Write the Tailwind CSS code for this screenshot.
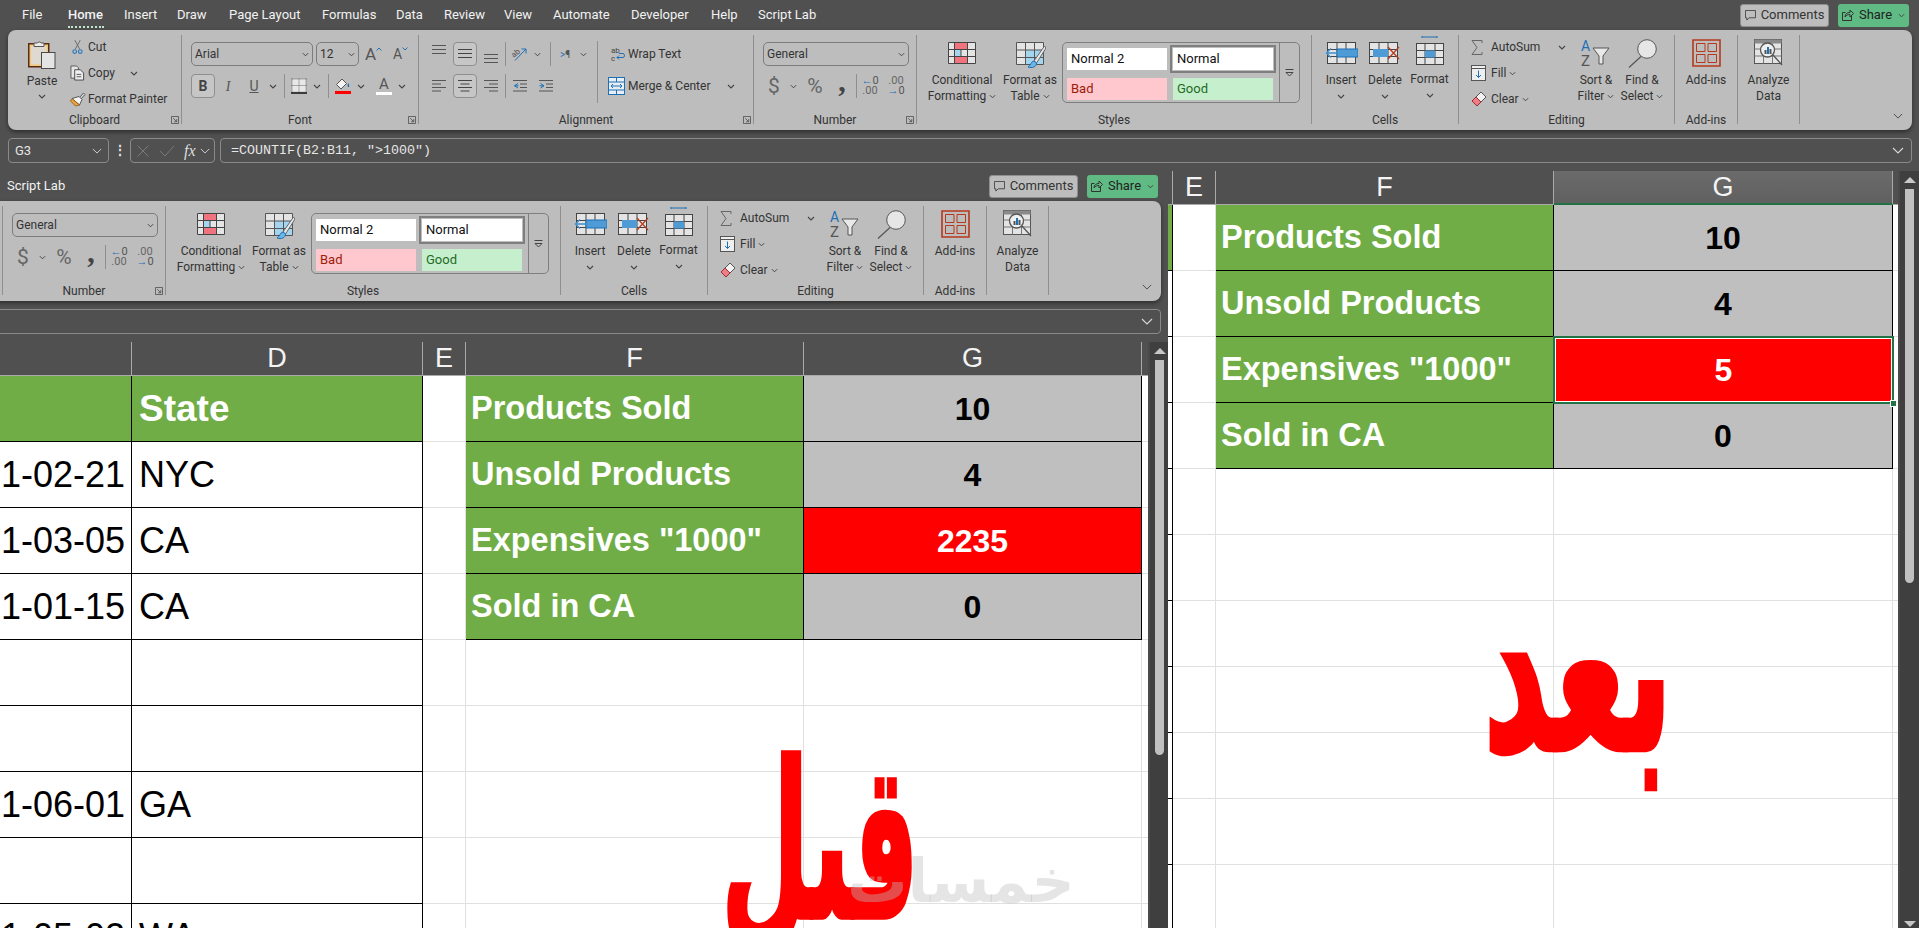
<!DOCTYPE html>
<html lang="en">
<head>
<meta charset="UTF-8">
<title>Excel COUNTIF before and after</title>
<script src="https://cdn.jsdelivr.net/npm/@tailwindcss/browser@4"></script>
</head>
<body class="bg-[#505050] overflow-hidden">

<!-- icon sheet -->
<svg class="absolute w-0 h-0">
  <symbol id="chev" viewBox="0 0 8 5"><path d="M1 1l3 3 3-3" fill="none" stroke="#444" stroke-width="1.1"/></symbol>
  <symbol id="chevl" viewBox="0 0 12 7"><path d="M1 1l5 5 5-5" fill="none" stroke="#d8d8d8" stroke-width="1.1"/></symbol>
  <symbol id="chevd" viewBox="0 0 12 7"><path d="M1 1l5 5 5-5" fill="none" stroke="#444" stroke-width="1.1"/></symbol>
  <symbol id="launch" viewBox="0 0 9 9"><path d="M.5 8.5v-8h8v8zM2.5 2.5l4 4M6.5 3.5v3h-3" fill="none" stroke="#555"/></symbol>
  <symbol id="paste" viewBox="0 0 28 30">
    <rect x=".75" y="4.75" width="20" height="23" fill="#f3c878" stroke="#5b2a12" stroke-width="1.5"/>
    <rect x="3" y="7" width="15.5" height="18.5" fill="#dedad2"/>
    <path d="M6 7.5V4h3.5a2 2 0 0 1 3.500 0H16v3.500z" fill="#ececec" stroke="#555"/>
    <rect x="13.500" y="13.500" width="13.500" height="16" fill="#e4e4e4" stroke="#4a4a4a"/>
  </symbol>
  <symbol id="cut" viewBox="0 0 12 16"><path d="M3 .5l5.500 10M9 .5L3.500 10.500" stroke="#666" fill="none"/><circle cx="3" cy="13" r="2" fill="none" stroke="#2a78b8" stroke-width="1.200"/><circle cx="9" cy="13" r="2" fill="none" stroke="#2a78b8" stroke-width="1.200"/></symbol>
  <symbol id="copy" viewBox="0 0 16 16"><path d="M1 .5h6l2 2v11H1z" fill="#e6e6e6" stroke="#555"/><path d="M5 4.500h6l3.500 3.500v7.500H5z" fill="#efefef" stroke="#444"/><path d="M7 9.500h5M7 12h5" stroke="#555"/></symbol>
  <symbol id="brush" viewBox="0 0 16 15"><path d="M9 6l4.500-5 1.500 1.500L10.500 7.500z" fill="#dcdcdc" stroke="#555"/><path d="M2 6.500L9 4.500l3 3L9.500 13z" fill="#f5f5f5" stroke="#555"/><path d="M2 6.500l7.500 6.500-4 1L.5 9z" fill="#e8a33a" stroke="#8a4a12" stroke-width=".7"/></symbol>
  <symbol id="border" viewBox="0 0 16 16"><rect x="1" y="1" width="14" height="12.500" fill="#e8e8e8"/><path d="M.5 1h15M.5 7.500h15M1 .5v13M8 .5v13M15 .5v13" stroke="#666" stroke-dasharray="1 1" fill="none"/><path d="M0 15h16" stroke="#111" stroke-width="1.500"/></symbol>
  <symbol id="fill" viewBox="0 0 16 16"><path d="M7 1L1.500 6.500l4.500 4.500 5.500-5.500z" fill="#f4f4f4" stroke="#555"/><path d="M13 5c1 1 1.500 2.500 1 4-1 .5-1.500-.5-1.500-1.500z" fill="#1f6fb5"/><path d="M0 13h16v3H0z" fill="#f00"/></symbol>
  <symbol id="al-t" viewBox="0 0 14 12"><path d="M0 .5h14M0 4.500h14M0 8.500h14" stroke="#555" fill="none"/></symbol>
  <symbol id="al-m" viewBox="0 0 14 12"><path d="M0 1.500h14M0 5.500h14M0 9.500h14" stroke="#444" fill="none"/></symbol>
  <symbol id="al-b" viewBox="0 0 14 12"><path d="M0 3.500h14M0 7.500h14M0 11.500h14" stroke="#555" fill="none"/></symbol>
  <symbol id="h-l" viewBox="0 0 14 14"><path d="M0 1.500h14M0 5h9M0 8.500h14M0 12h9" stroke="#555" fill="none"/></symbol>
  <symbol id="h-c" viewBox="0 0 14 14"><path d="M0 1.500h14M2.500 5h9M0 8.500h14M2.500 12h9" stroke="#444" fill="none"/></symbol>
  <symbol id="h-r" viewBox="0 0 14 14"><path d="M0 1.500h14M5 5h9M0 8.500h14M5 12h9" stroke="#555" fill="none"/></symbol>
  <symbol id="outd" viewBox="0 0 14 14"><path d="M0 1.500h14M7 5h7M7 8.500h7M0 12h14" stroke="#555" fill="none"/><path d="M5 4.500L1.500 6.800 5 9M1.500 6.800h4" stroke="#1f6fb5" fill="none"/></symbol>
  <symbol id="ind" viewBox="0 0 14 14"><path d="M0 1.500h14M7 5h7M7 8.500h7M0 12h14" stroke="#555" fill="none"/><path d="M1.500 4.500L5 6.800 1.500 9M5 6.800H.5" stroke="#1f6fb5" fill="none"/></symbol>
  <symbol id="orient" viewBox="0 0 16 16"><text x="0" y="9" font-size="8" fill="#555" transform="rotate(-40 5 8)" font-family="Roboto">ab</text><path d="M3 14.500L14 3M9.500 3H14v4.500" stroke="#1f6fb5" fill="none"/></symbol>
  <symbol id="wrap" viewBox="0 0 14 16"><text x="0" y="7" font-size="8" fill="#444" font-family="Roboto">ab</text><text x="0" y="15" font-size="8" fill="#444" font-family="Roboto">c</text><path d="M6 11.500h6c2 0 2-4 0-4H8M8 9.500l-2 2 2 2" stroke="#1f6fb5" fill="none"/></symbol>
  <symbol id="merge" viewBox="0 0 17 18"><rect x=".5" y=".5" width="16" height="17" fill="#e8eef4" stroke="#1f6fb5"/><path d="M.5 5h16M.5 13h16M8.500.5V5M8.500 13v4.500" stroke="#1f6fb5"/><path d="M3 9h11M5 7L3 9l2 2M12 7l2 2-2 2" stroke="#1f6fb5" fill="none"/></symbol>
  <symbol id="cf" viewBox="0 0 28 22">
    <rect x=".5" y=".5" width="27" height="21" fill="#e4e4e4"/>
    <rect x="6" y=".5" width="13" height="7" fill="#f0747e"/><rect x="6" y="7.500" width="7" height="7" fill="#a3d5ef"/><rect x="6" y="14.500" width="13" height="7" fill="#f0747e"/>
    <path d="M.5.500h27v21H.5zM.5 7.500h27M.5 14.500h27M6.500.500v21M13 7.500v7M19.500.500v21" fill="none" stroke="#444"/>
  </symbol>
  <symbol id="ft" viewBox="0 0 30 27">
    <rect x=".5" y=".5" width="27" height="22" fill="#e4e4e4"/><rect x="9.500" y="8" width="18" height="14.500" fill="#a3d5ef"/>
    <path d="M.5.500h27v22H.5zM.5 8h27M.5 15.500h27M9.500.500v22M18.500.500v22" fill="none" stroke="#555"/>
    <path d="M28.500 4L18 19l2.500 2L30 6z" fill="#e8e8e8" stroke="#666"/><path d="M18 19c-3 .5-3 4-6 6 4 1.500 8.500 0 8.500-4z" fill="#6bb6e6" stroke="#1f6fb5"/>
  </symbol>
  <symbol id="ins" viewBox="0 0 33 22"><rect x="2.500" y=".5" width="28" height="21" fill="#e4e4e4" stroke="#444"/><path d="M12 .5v21M21 .5v21M2.500 7.500h28M2.500 14.500h28" stroke="#444"/><rect x="12" y="7" width="21" height="8" fill="#4f9bd6" stroke="#1f6fb5"/><path d="M13 11H1.500M6 6.500L1.500 11 6 15.500" fill="none" stroke="#3e8dcc" stroke-width="1.300"/></symbol>
  <symbol id="del" viewBox="0 0 33 22"><rect x=".5" y=".5" width="28" height="21" fill="#e4e4e4" stroke="#444"/><path d="M10 .5v21M19 .5v21M.5 7.500h28M.5 14.500h28" stroke="#444"/><rect x="4" y="7" width="15" height="8" fill="#4f9bd6"/><path d="M19 5l11 12M30 5L19 17" stroke="#b5391c" stroke-width="1.200"/></symbol>
  <symbol id="fmt" viewBox="0 0 28 29"><path d="M6 1h15M6 0v2M21 0v2" stroke="#1f6fb5"/><rect x=".5" y="7.500" width="27" height="21" fill="#e4e4e4" stroke="#444"/><path d="M.5 14.500h27M.5 21.500h27M9 7.500v21M19 7.500v21" stroke="#444"/><rect x="9" y="14.500" width="10" height="7" fill="#4f9bd6"/></symbol>
  <symbol id="sigma" viewBox="0 0 12 15"><path d="M11 3V.5H1l5 7-5 7h10V12" fill="none" stroke="#666"/></symbol>
  <symbol id="filld" viewBox="0 0 15 16"><rect x=".5" y=".5" width="14" height="15" fill="#efefef" stroke="#555"/><path d="M.5 3.500h14" stroke="#555"/><path d="M7.500 5.500v7M5 10l2.500 2.500L10 10" fill="none" stroke="#1f6fb5"/></symbol>
  <symbol id="eraser" viewBox="0 0 16 16"><path d="M1 10l9-9 5 5-9 9z" fill="#f2f2f2" stroke="#555"/><path d="M1 10l4-4 5 5-4 4z" fill="#ee7d88" stroke="#9a3030"/></symbol>
  <symbol id="sort" viewBox="0 0 30 28"><text x="0" y="12" font-size="14" fill="#1f6fb5" font-family="Roboto">A</text><text x="0" y="27" font-size="15" fill="#555" font-family="Roboto">Z</text><path d="M12 9h16l-6 8v8h-4v-8z" fill="#e8e8e8" stroke="#555"/></symbol>
  <symbol id="find" viewBox="0 0 29 29"><circle cx="19" cy="10" r="9.300" fill="#e6e6e6" stroke="#555"/><path d="M13 17.500L1 28.500" stroke="#555" stroke-width="1.200"/></symbol>
  <symbol id="addin" viewBox="0 0 29 28"><path d="M1 1h27v26H1z" fill="none" stroke="#b5391c" stroke-width="1.600"/><path d="M4.500 4.500h8.500v8H4.500zM16 4.500h8.500v8H16zM4.500 15.500h8.500v8H4.500zM16 15.500h8.500v8H16z" fill="none" stroke="#b5391c"/></symbol>
  <symbol id="analyze" viewBox="0 0 29 28"><rect x=".5" y=".5" width="27" height="24" fill="#e4e4e4" stroke="#555"/><rect x=".5" y=".5" width="27" height="4" fill="#8a8a8a"/><path d="M.5 10h27M.5 17h27M9.500 4.500v20M18.500 4.500v20" stroke="#777"/><circle cx="13.500" cy="11" r="7" fill="#efefef" stroke="#555" stroke-width="1.300"/><path d="M10.500 11h2v4h-2z" fill="#555"/><path d="M13 8h2v7h-2z" fill="#1f6fb5"/><path d="M15.500 10h2v5h-2z" fill="#555"/><path d="M19 16l9 10" stroke="#555" stroke-width="1.300"/></symbol>
  <symbol id="gal" viewBox="0 0 9 8"><path d="M.5.500h8M1 3.500h7L4.500 7z" fill="none" stroke="#444"/></symbol>
  <symbol id="comm" viewBox="0 0 12 12"><path d="M.5.500h11v8H4.500L2 11V8.500H.5z" fill="none" stroke="#444"/></symbol>
  <symbol id="share" viewBox="0 0 12 12"><path d="M9.500 7v4.500h-9v-8h3" fill="none" stroke="#333"/><path d="M3 8c0-3 2-4.500 5-4.500V1l3.500 3.500L8 8V5.500C6 5.500 4.500 6 3 8z" fill="none" stroke="#333"/></symbol>
  <symbol id="caret" viewBox="0 0 6 4"><path d="M.5 3.500L3 1l2.500 2.500" fill="none" stroke="#1f6fb5"/></symbol>
  <symbol id="caretd" viewBox="0 0 6 4"><path d="M.5.500L3 3 5.500.500" fill="none" stroke="#1f6fb5"/></symbol>
</svg>

<template id="chrome">
  <div class="h-[171px] w-[1919px] font-['Roboto',sans-serif] text-[12px] text-[#333]">
    <!-- tabs -->
    <div class="h-[30px] flex items-center justify-between pl-[22px] pr-[10px] text-[13px] text-[#f2f2f2]">
      <nav class="flex">
        <span class="w-[46px]">File</span>
        <span class="w-[56px] relative font-medium">Home<span class="absolute left-0 w-[36px] -bottom-[3px] border-b-2 border-dotted border-[#bfe6cc]"></span></span>
        <span class="w-[53px]">Insert</span>
        <span class="w-[52px]">Draw</span>
        <span class="w-[93px]">Page Layout</span>
        <span class="w-[74px]">Formulas</span>
        <span class="w-[48px]">Data</span>
        <span class="w-[60px]">Review</span>
        <span class="w-[49px]">View</span>
        <span class="w-[78px]">Automate</span>
        <span class="w-[80px]">Developer</span>
        <span class="w-[47px]">Help</span>
        <span>Script Lab</span>
      </nav>
      <div class="flex gap-[9px]">
        <button class="w-[89px] h-[23px] flex items-center justify-center gap-[5px] bg-[#bdbdbd] border border-[#8e8e8e] rounded-[3px] text-[#333]"><svg class="w-[11px] h-[11px]"><use href="#comm"/></svg>Comments</button>
        <button class="w-[71px] h-[23px] flex items-center justify-center gap-[5px] bg-[#5fbb83] rounded-[3px] text-[#222]"><svg class="w-[12px] h-[12px]"><use href="#share"/></svg>Share<svg class="w-[7px] h-[5px] ml-[1px]"><use href="#chev"/></svg></button>
      </div>
    </div>

    <!-- ribbon -->
    <div class="ml-2 w-[1904px] h-[100px] pt-[5px] flex bg-[#bdbdbd] rounded-lg shadow-[0_2px_4px_rgba(0,0,0,0.45)]">

      <!-- Clipboard -->
      <section class="relative w-[174px] h-[89px] border-r border-[#8f8f8f]">
        <div class="h-[77px] flex">
          <div class="w-[56px] ml-[6px] pt-[4px] flex flex-col items-center">
            <svg class="w-[28px] h-[30px]"><use href="#paste"/></svg>
            <span class="mt-[4px] leading-[16px]">Paste</span>
            <svg class="w-[8px] h-[5px] mt-[5px]"><use href="#chev"/></svg>
          </div>
          <div class="-mt-px">
            <div class="h-[26px] flex items-center"><span class="w-[18px] flex pl-[2px]"><svg class="w-[11px] h-[16px]"><use href="#cut"/></svg></span>Cut</div>
            <div class="h-[26px] flex items-center"><span class="w-[18px] flex"><svg class="w-[15px] h-[16px]"><use href="#copy"/></svg></span>Copy<svg class="w-[8px] h-[5px] ml-[15px]"><use href="#chev"/></svg></div>
            <div class="h-[26px] flex items-center"><span class="w-[18px] flex"><svg class="w-[16px] h-[15px]"><use href="#brush"/></svg></span>Format Painter</div>
          </div>
        </div>
        <div class="relative h-[16px] leading-[16px] text-center">Clipboard<svg class="absolute right-[2px] top-[4px] w-[8px] h-[8px]"><use href="#launch"/></svg></div>
      </section>

      <!-- Font -->
      <section class="relative w-[237px] h-[89px] border-r border-[#8f8f8f]">
        <div class="h-[77px] pt-[7px] pl-[9px]">
          <div class="h-[24px] flex items-center">
            <div class="w-[122px] h-[24px] flex items-center justify-between px-[3px] border border-[#7c7c7c] rounded-[5px]"><span>Arial</span><svg class="w-[7px] h-[5px]"><use href="#chev"/></svg></div>
            <div class="w-[43px] h-[24px] ml-[3px] flex items-center justify-between px-[3px] border border-[#7c7c7c] rounded-[5px]"><span>12</span><svg class="w-[7px] h-[5px]"><use href="#chev"/></svg></div>
            <div class="w-[20px] ml-[6px] flex items-start text-[#555] text-[17px] leading-[20px]">A<svg class="w-[6px] h-[4px] mt-[3px]"><use href="#caret"/></svg></div>
            <div class="w-[18px] ml-[8px] flex items-start text-[#555] text-[14px] leading-[20px]">A<svg class="w-[6px] h-[4px] mt-[3px]"><use href="#caretd"/></svg></div>
          </div>
          <div class="h-[24px] mt-[8px] flex items-center">
            <div class="w-[24px] h-[24px] flex items-center justify-center bg-[#c6c6c6] border border-[#8f8f8f] rounded-[4px] font-bold text-[14px] text-[#444]">B</div>
            <div class="w-[26px] text-center text-[#555] text-[14px] italic font-['Liberation_Serif']">I</div>
            <div class="w-[26px] text-center text-[#555] text-[14px] underline">U</div>
            <div class="w-[12px] flex justify-center"><svg class="w-[8px] h-[5px]"><use href="#chev"/></svg></div>
            <div class="w-px h-[24px] ml-[5px] bg-[#8f8f8f]"></div>
            <svg class="w-[16px] h-[16px] ml-[6px]"><use href="#border"/></svg>
            <div class="w-[20px] flex justify-center"><svg class="w-[8px] h-[5px]"><use href="#chev"/></svg></div>
            <div class="w-px h-[24px] ml-[1px] bg-[#8f8f8f]"></div>
            <svg class="w-[16px] h-[16px] ml-[6px]"><use href="#fill"/></svg>
            <div class="w-[20px] flex justify-center"><svg class="w-[8px] h-[5px]"><use href="#chev"/></svg></div>
            <div class="w-[16px] ml-[5px] flex flex-col items-center text-[15px] leading-[13px] text-[#555]">A<span class="w-[16px] h-[3px] mt-[1px] bg-white"></span></div>
            <div class="w-[20px] flex justify-center"><svg class="w-[8px] h-[5px]"><use href="#chev"/></svg></div>
          </div>
        </div>
        <div class="relative h-[16px] leading-[16px] text-center">Font<svg class="absolute right-[2px] top-[4px] w-[8px] h-[8px]"><use href="#launch"/></svg></div>
      </section>

      <!-- Alignment -->
      <section class="relative w-[335px] h-[89px] border-r border-[#8f8f8f]">
        <div class="h-[77px] pt-[7px] pl-[8px] flex">
          <div class="w-[171px] h-[62px] -mt-px pt-px border-r border-[#8f8f8f]">
            <div class="h-[24px] flex items-center">
              <div class="w-[24px] flex justify-center"><svg class="w-[14px] h-[12px] -mt-[6px]"><use href="#al-t"/></svg></div>
              <div class="w-[24px] h-[24px] ml-[2px] flex items-center justify-center bg-[#c6c6c6] border border-[#8f8f8f] rounded-[4px]"><svg class="w-[14px] h-[12px]"><use href="#al-m"/></svg></div>
              <div class="w-[24px] ml-[2px] flex justify-center"><svg class="w-[14px] h-[12px] mt-[6px]"><use href="#al-b"/></svg></div>
              <div class="w-px h-[24px] ml-[2px] bg-[#8f8f8f]"></div>
              <div class="w-[24px] ml-[2px] flex justify-center"><svg class="w-[16px] h-[16px]"><use href="#orient"/></svg></div>
              <div class="w-[10px] flex justify-center"><svg class="w-[7px] h-[5px]"><use href="#chev"/></svg></div>
              <div class="w-px h-[24px] ml-[8px] bg-[#8f8f8f]"></div>
              <div class="w-[24px] ml-[2px] text-center text-[10px] text-[#555]"><span class="text-[#1f6fb5]">&gt;</span>¶</div>
              <div class="w-[10px] ml-px flex justify-center"><svg class="w-[7px] h-[5px]"><use href="#chev"/></svg></div>
            </div>
            <div class="h-[24px] mt-[8px] flex items-center">
              <div class="w-[24px] flex justify-center"><svg class="w-[14px] h-[14px]"><use href="#h-l"/></svg></div>
              <div class="w-[24px] h-[24px] ml-[2px] flex items-center justify-center bg-[#c6c6c6] border border-[#8f8f8f] rounded-[4px]"><svg class="w-[14px] h-[14px]"><use href="#h-c"/></svg></div>
              <div class="w-[24px] ml-[2px] flex justify-center"><svg class="w-[14px] h-[14px]"><use href="#h-r"/></svg></div>
              <div class="w-px h-[24px] ml-[2px] bg-[#8f8f8f]"></div>
              <div class="w-[24px] ml-[2px] flex justify-center"><svg class="w-[14px] h-[14px]"><use href="#outd"/></svg></div>
              <div class="w-[24px] ml-[2px] flex justify-center"><svg class="w-[14px] h-[14px]"><use href="#ind"/></svg></div>
            </div>
          </div>
          <div class="w-[150px]">
            <div class="h-[24px] flex items-center pl-[13px]"><svg class="w-[14px] h-[16px]"><use href="#wrap"/></svg><span class="ml-[3px]">Wrap Text</span></div>
            <div class="h-[24px] mt-[8px] flex items-center pl-[10px]"><svg class="w-[17px] h-[18px]"><use href="#merge"/></svg><span class="ml-[3px]">Merge &amp; Center</span><svg class="w-[8px] h-[5px] ml-[17px]"><use href="#chev"/></svg></div>
          </div>
        </div>
        <div class="relative h-[16px] leading-[16px] text-center">Alignment<svg class="absolute right-[2px] top-[4px] w-[8px] h-[8px]"><use href="#launch"/></svg></div>
      </section>

      <!-- Number -->
      <section class="relative w-[163px] h-[89px] border-r border-[#8f8f8f]">
        <div class="h-[77px] pt-[7px] pl-[9px]">
          <div class="w-[146px] h-[24px] flex items-center justify-between px-[3px] border border-[#7c7c7c] rounded-[5px]">General<svg class="w-[7px] h-[5px]"><use href="#chev"/></svg></div>
          <div class="h-[24px] mt-[8px] flex items-center text-[#666]">
            <div class="w-[20px] ml-px text-center text-[21px] leading-[24px]">$</div>
            <div class="w-[12px] ml-[3px] flex justify-center"><svg class="w-[7px] h-[5px]"><use href="#chev"/></svg></div>
            <div class="w-[20px] ml-[6px] text-center text-[21px] leading-[24px]">%</div>
            <div class="w-[20px] h-[24px] ml-[7px] text-center text-[30px] font-bold font-['Liberation_Serif'] leading-[14px] text-[#444]">,</div>
            <div class="w-px h-[24px] ml-[4px] bg-[#8f8f8f]"></div>
            <div class="w-[24px] ml-px flex flex-col items-center text-[11px] leading-[10px]"><span class="text-[#1f6fb5]">←<span class="text-[#555]">0</span></span><span>.00</span></div>
            <div class="w-[24px] ml-[2px] flex flex-col items-center text-[11px] leading-[10px]"><span>.00</span><span class="text-[#1f6fb5]">→<span class="text-[#555]">0</span></span></div>
          </div>
        </div>
        <div class="relative h-[16px] leading-[16px] text-center">Number<svg class="absolute right-[2px] top-[4px] w-[8px] h-[8px]"><use href="#launch"/></svg></div>
      </section>

      <!-- Styles -->
      <section class="relative w-[395px] h-[89px] border-r border-[#8f8f8f]">
        <div class="h-[77px] pt-[7px] flex">
          <div class="w-[66px] ml-[12px] flex flex-col items-center leading-[16px]">
            <svg class="w-[28px] h-[22px] mb-[8px]"><use href="#cf"/></svg>
            <span>Conditional</span>
            <span class="flex items-center gap-[3px]">Formatting<svg class="w-[7px] h-[5px]"><use href="#chev"/></svg></span>
          </div>
          <div class="w-[64px] ml-[3px] flex flex-col items-center leading-[16px]">
            <svg class="w-[30px] h-[27px] mb-[3px] ml-[2px]"><use href="#ft"/></svg>
            <span>Format as</span>
            <span class="flex items-center gap-[3px]">Table<svg class="w-[7px] h-[5px]"><use href="#chev"/></svg></span>
          </div>
          <div class="w-[238px] h-[61px] flex border border-[#7f7f7f] rounded-[5px]">
            <div class="w-[215px] pt-[5px] pl-[4px] grid grid-cols-[100px_100px] gap-x-[6px] gap-y-[6px] text-[13px] leading-[22px]">
              <div class="h-[22px] pl-[4px] bg-white text-[#111]">Normal 2</div>
              <div class="h-[22px] pl-[4px] bg-white text-[#111] outline-2 outline-offset-[1px] outline-[#7f7f7f]">Normal</div>
              <div class="h-[22px] pl-[4px] bg-[#ffc7ce] text-[#9c1c06]">Bad</div>
              <div class="h-[22px] pl-[4px] bg-[#c6efce] text-[#1f6b1f]">Good</div>
            </div>
            <div class="flex-1 ml-[1px] flex items-center justify-center border-l border-[#7f7f7f]"><svg class="w-[9px] h-[8px]"><use href="#gal"/></svg></div>
          </div>
        </div>
        <div class="h-[16px] leading-[16px] text-center">Styles</div>
      </section>

      <!-- Cells -->
      <section class="relative w-[147px] h-[89px] border-r border-[#8f8f8f]">
        <div class="h-[77px] pt-[7px] pl-[7px] flex leading-[16px]">
          <div class="w-[44px] flex flex-col items-center"><svg class="w-[33px] h-[22px] mb-[8px]"><use href="#ins"/></svg><span>Insert</span><svg class="w-[8px] h-[5px] mt-[6px]"><use href="#chev"/></svg></div>
          <div class="w-[44px] flex flex-col items-center"><svg class="w-[33px] h-[22px] mb-[8px]"><use href="#del"/></svg><span>Delete</span><svg class="w-[8px] h-[5px] mt-[6px]"><use href="#chev"/></svg></div>
          <div class="w-[45px] flex flex-col items-center -mt-[6px]"><svg class="w-[28px] h-[29px] mb-[6px]"><use href="#fmt"/></svg><span>Format</span><svg class="w-[8px] h-[5px] mt-[6px]"><use href="#chev"/></svg></div>
        </div>
        <div class="h-[16px] leading-[16px] text-center">Cells</div>
      </section>

      <!-- Editing -->
      <section class="relative w-[216px] h-[89px] border-r border-[#8f8f8f]">
        <div class="h-[77px] flex pl-[12px]">
          <div class="w-[102px] -mt-px">
            <div class="w-[95px] h-[26px] flex items-center"><span class="w-[20px] flex"><svg class="w-[12px] h-[15px]"><use href="#sigma"/></svg></span>AutoSum<svg class="w-[8px] h-[5px] ml-auto"><use href="#chev"/></svg></div>
            <div class="h-[26px] flex items-center"><span class="w-[20px] flex"><svg class="w-[15px] h-[16px]"><use href="#filld"/></svg></span>Fill<svg class="w-[7px] h-[5px] ml-[3px]"><use href="#chev"/></svg></div>
            <div class="h-[26px] flex items-center"><span class="w-[20px] flex"><svg class="w-[16px] h-[16px]"><use href="#eraser"/></svg></span>Clear<svg class="w-[7px] h-[5px] ml-[3px]"><use href="#chev"/></svg></div>
          </div>
          <div class="w-[46px] pt-[4px] flex flex-col items-center leading-[16px]"><svg class="w-[30px] h-[28px] mb-[5px]"><use href="#sort"/></svg><span>Sort &amp;</span><span class="flex items-center gap-[3px]">Filter<svg class="w-[7px] h-[5px]"><use href="#chev"/></svg></span></div>
          <div class="w-[46px] pt-[4px] flex flex-col items-center leading-[16px]"><svg class="w-[29px] h-[29px] mb-[4px]"><use href="#find"/></svg><span>Find &amp;</span><span class="flex items-center gap-[3px]">Select<svg class="w-[7px] h-[5px]"><use href="#chev"/></svg></span></div>
        </div>
        <div class="h-[16px] leading-[16px] text-center">Editing</div>
      </section>

      <!-- Add-ins -->
      <section class="relative w-[63px] h-[89px] border-r border-[#8f8f8f]">
        <div class="h-[77px] pt-[4px] flex flex-col items-center leading-[16px]"><svg class="w-[29px] h-[28px] mb-[5px]"><use href="#addin"/></svg><span>Add-ins</span></div>
        <div class="h-[16px] leading-[16px] text-center">Add-ins</div>
      </section>

      <!-- Analyze -->
      <section class="relative w-[62px] h-[89px] border-r border-[#8f8f8f]">
        <div class="h-[77px] pt-[4px] flex flex-col items-center leading-[16px]"><svg class="w-[29px] h-[28px] mb-[5px]"><use href="#analyze"/></svg><span>Analyze</span><span>Data</span></div>
      </section>

      <div class="flex-1 h-[89px] flex items-end justify-end pr-[9px] pb-[5px]"><svg class="w-[10px] h-[6px]"><use href="#chevd"/></svg></div>
    </div>

    <!-- formula bar -->
    <div class="mt-[8px] ml-2 h-[25px] flex items-stretch text-[#e6e6e6]">
      <div class="w-[101px] flex items-center justify-between px-[6px] border border-[#8a8a8a] rounded-[4px] text-[13px]">G3<svg class="w-[10px] h-[6px]"><use href="#chevl"/></svg></div>
      <div class="w-[21px] flex items-center justify-center text-[14px] font-bold text-[#ddd]">⋮</div>
      <div class="w-[85px] flex items-center pl-[6px] border border-[#8a8a8a] rounded-[4px]">
        <svg class="w-[12px] h-[12px]" viewBox="0 0 12 12"><path d="M.5.500l11 11M11.500.500l-11 11" stroke="#7a7a7a"/></svg>
        <svg class="w-[16px] h-[12px] ml-[10px]" viewBox="0 0 16 12"><path d="M1 6l5 5L15 1" fill="none" stroke="#7a7a7a"/></svg>
        <span class="ml-[9px] font-['Liberation_Serif'] italic text-[16px] text-[#ddd]">fx</span>
        <svg class="w-[10px] h-[6px] ml-[4px]"><use href="#chevl"/></svg>
      </div>
      <div class="ml-[5px] w-[1692px] flex items-center justify-between pl-[10px] pr-[7px] border border-[#8a8a8a] rounded-[4px] font-['Liberation_Mono'] text-[13.33px]">=COUNTIF(B2:B11, "&gt;1000")<svg class="w-[12px] h-[7px]"><use href="#chevl"/></svg></div>
    </div>
  </div>
</template>

<div class="w-[1919px] h-[928px] overflow-hidden">
  <div data-chrome></div>

  <div class="h-[757px] flex">

    <!-- before -->
    <div class="relative w-[1168px] h-[757px] overflow-hidden">
      <div data-chrome class="-ml-[751px]"></div>
      <div class="flex">
        <div class="w-[1148px] font-['Liberation_Sans'] bg-white text-black text-[36px]">
          <div class="h-[34px] grid grid-cols-[132px_291px_43px_338px_338px_6px] bg-[#505050] border-b border-[#aaa] text-[#f4f4f4] text-[27px] text-center leading-[33px]">
            <div class="border-r border-[#aaa]"></div><div class="border-r border-[#aaa]">D</div><div class="border-r border-[#aaa]">E</div><div class="border-r border-[#aaa]">F</div><div class="border-r border-[#aaa]">G</div><div></div>
          </div>
          <div class="grid grid-cols-[132px_291px_43px_338px_338px_6px] auto-rows-[66px]">
            <!-- row 1 -->
            <div class="border-r border-b border-black bg-[#70ad47]"></div>
            <div class="flex items-center pl-[7px] border-r border-b border-black bg-[#70ad47] text-white font-bold text-[37px]">State</div>
            <div class="border-r border-b border-[#e0e0e0]"></div>
            <div class="flex items-center pl-[5px] border-r border-b border-black bg-[#70ad47] text-white font-bold text-[32.5px]">Products Sold</div>
            <div class="flex items-center justify-center border-r border-b border-black bg-[#bfbfbf] font-bold text-[32px]">10</div>
            <div class="border-b border-[#e0e0e0]"></div>
            <!-- row 2 -->
            <div class="flex items-center justify-end pr-[6px] overflow-hidden whitespace-nowrap border-r border-b border-black">2021-02-21</div>
            <div class="flex items-center pl-[7px] border-r border-b border-black">NYC</div>
            <div class="border-r border-b border-[#e0e0e0]"></div>
            <div class="flex items-center pl-[5px] border-r border-b border-black bg-[#70ad47] text-white font-bold text-[32.5px]">Unsold Products</div>
            <div class="flex items-center justify-center border-r border-b border-black bg-[#bfbfbf] font-bold text-[32px]">4</div>
            <div class="border-b border-[#e0e0e0]"></div>
            <!-- row 3 -->
            <div class="flex items-center justify-end pr-[6px] overflow-hidden whitespace-nowrap border-r border-b border-black">2021-03-05</div>
            <div class="flex items-center pl-[7px] border-r border-b border-black">CA</div>
            <div class="border-r border-b border-[#e0e0e0]"></div>
            <div class="flex items-center pl-[5px] border-r border-b border-black bg-[#70ad47] text-white font-bold text-[32.5px]">Expensives "1000"</div>
            <div class="flex items-center justify-center border-r border-b border-black bg-[#ff0000] text-white font-bold text-[32px]">2235</div>
            <div class="border-b border-[#e0e0e0]"></div>
            <!-- row 4 -->
            <div class="flex items-center justify-end pr-[6px] overflow-hidden whitespace-nowrap border-r border-b border-black">2021-01-15</div>
            <div class="flex items-center pl-[7px] border-r border-b border-black">CA</div>
            <div class="border-r border-b border-[#e0e0e0]"></div>
            <div class="flex items-center pl-[5px] border-r border-b border-black bg-[#70ad47] text-white font-bold text-[32.5px]">Sold in CA</div>
            <div class="flex items-center justify-center border-r border-b border-black bg-[#bfbfbf] font-bold text-[32px]">0</div>
            <div class="border-b border-[#e0e0e0]"></div>
            <!-- row 5 -->
            <div class="border-r border-b border-black"></div><div class="border-r border-b border-black"></div><div class="border-r border-b border-[#e0e0e0]"></div><div class="border-r border-b border-[#e0e0e0]"></div><div class="border-r border-b border-[#e0e0e0]"></div><div class="border-b border-[#e0e0e0]"></div>
            <!-- row 6 -->
            <div class="border-r border-b border-black"></div><div class="border-r border-b border-black"></div><div class="border-r border-b border-[#e0e0e0]"></div><div class="border-r border-b border-[#e0e0e0]"></div><div class="border-r border-b border-[#e0e0e0]"></div><div class="border-b border-[#e0e0e0]"></div>
            <!-- row 7 -->
            <div class="flex items-center justify-end pr-[6px] overflow-hidden whitespace-nowrap border-r border-b border-black">2021-06-01</div>
            <div class="flex items-center pl-[7px] border-r border-b border-black">GA</div>
            <div class="border-r border-b border-[#e0e0e0]"></div><div class="border-r border-b border-[#e0e0e0]"></div><div class="border-r border-b border-[#e0e0e0]"></div><div class="border-b border-[#e0e0e0]"></div>
            <!-- row 8 -->
            <div class="border-r border-b border-black"></div><div class="border-r border-b border-black"></div><div class="border-r border-b border-[#e0e0e0]"></div><div class="border-r border-b border-[#e0e0e0]"></div><div class="border-r border-b border-[#e0e0e0]"></div><div class="border-b border-[#e0e0e0]"></div>
            <!-- row 9 -->
            <div class="flex items-center justify-end pr-[6px] overflow-hidden whitespace-nowrap border-r border-b border-black">2021-05-02</div>
            <div class="flex items-center pl-[7px] border-r border-b border-black">WA</div>
            <div class="border-r border-b border-[#e0e0e0]"></div><div class="border-r border-b border-[#e0e0e0]"></div><div class="border-r border-b border-[#e0e0e0]"></div><div class="border-b border-[#e0e0e0]"></div>
          </div>
        </div>
        <!-- scrollbar -->
        <div class="w-[20px] h-[586px] bg-[#3f3f3f] border-l-2 border-[#4a4a4a] relative">
          <div class="absolute left-[5px] top-[18px] w-[9px] h-[395px] rounded-b-md bg-[#c0c0c0]"></div>
          <div class="absolute left-[4px] top-[6px] w-0 h-0 border-x-[6px] border-x-transparent border-b-[6px] border-b-[#c8c8c8]"></div>
        </div>
      </div>
      <span dir="rtl" lang="ar" class="absolute left-[620px] top-[592px] w-[400px] flex justify-center whitespace-nowrap font-['DejaVu_Sans',sans-serif] font-bold text-[160px] leading-[160px] text-[#ff0000] scale-x-[.63] scale-y-[1.35] [-webkit-text-stroke:4px_#ff0000]">قبل</span>
      <span dir="rtl" lang="ar" class="absolute left-[846px] top-[670px] w-[230px] text-center font-['DejaVu_Sans',sans-serif] font-bold text-[60px] leading-[80px] text-[#bebebe]/40">خمسات</span>
    </div>

    <!-- after -->
    <div class="relative w-[751px] h-[757px] flex overflow-hidden">
      <div class="w-[730px] font-['Liberation_Sans'] bg-white text-black">
        <div class="h-[34px] grid grid-cols-[5px_43px_338px_339px_5px] bg-[#505050] border-b border-[#aaa] text-[#f4f4f4] text-[27px] text-center leading-[33px]">
          <div class="border-r border-[#aaa]"></div><div class="border-r border-[#aaa]">E</div><div class="border-r border-[#aaa]">F</div><div class="h-[34px] border-r border-b-2 border-[#aaa] border-b-[#217346] bg-gradient-to-b from-[#6b6b6b] to-[#606060]">G</div><div></div>
        </div>
        <div class="grid grid-cols-[5px_43px_338px_339px_5px] auto-rows-[66px]">
          <!-- row 1 -->
          <div class="border-r border-b border-black bg-[#70ad47]"></div>
          <div class="border-r border-b border-[#e0e0e0]"></div>
          <div class="flex items-center pl-[5px] border-r border-b border-black bg-[#70ad47] text-white font-bold text-[32.5px]">Products Sold</div>
          <div class="flex items-center justify-center border-r border-b border-black bg-[#bfbfbf] font-bold text-[32px]">10</div>
          <div class="border-b border-[#e0e0e0]"></div>
          <!-- row 2 -->
          <div class="border-r border-b border-black"></div>
          <div class="border-r border-b border-[#e0e0e0]"></div>
          <div class="flex items-center pl-[5px] border-r border-b border-black bg-[#70ad47] text-white font-bold text-[32.5px]">Unsold Products</div>
          <div class="flex items-center justify-center border-r border-b border-black bg-[#bfbfbf] font-bold text-[32px]">4</div>
          <div class="border-b border-[#e0e0e0]"></div>
          <!-- row 3 -->
          <div class="border-r border-b border-black"></div>
          <div class="border-r border-b border-[#e0e0e0]"></div>
          <div class="flex items-center pl-[5px] border-r border-b border-black bg-[#70ad47] text-white font-bold text-[32.5px]">Expensives "1000"</div>
          <div class="relative flex items-center justify-center bg-[#ff0000] text-white font-bold text-[32px]">5
            <div class="absolute -left-px -top-px -right-px -bottom-px border-2 border-[#217346] shadow-[inset_0_0_0_1px_white]"></div>
            <div class="absolute -right-[4px] -bottom-[4px] w-[7px] h-[7px] bg-[#217346] border border-white"></div>
          </div>
          <div class="border-b border-[#e0e0e0]"></div>
          <!-- row 4 -->
          <div class="border-r border-b border-black"></div>
          <div class="border-r border-b border-[#e0e0e0]"></div>
          <div class="flex items-center pl-[5px] border-r border-b border-black bg-[#70ad47] text-white font-bold text-[32.5px]">Sold in CA</div>
          <div class="flex items-center justify-center border-r border-b border-black bg-[#bfbfbf] font-bold text-[32px]">0</div>
          <div class="border-b border-[#e0e0e0]"></div>
          <!-- empty rows -->
          <div class="border-r border-b border-black"></div><div class="border-r border-b border-[#e0e0e0]"></div><div class="border-r border-b border-[#e0e0e0]"></div><div class="border-r border-b border-[#e0e0e0]"></div><div class="border-b border-[#e0e0e0]"></div>
          <div class="border-r border-b border-black"></div><div class="border-r border-b border-[#e0e0e0]"></div><div class="border-r border-b border-[#e0e0e0]"></div><div class="border-r border-b border-[#e0e0e0]"></div><div class="border-b border-[#e0e0e0]"></div>
          <div class="border-r border-b border-black"></div><div class="border-r border-b border-[#e0e0e0]"></div><div class="border-r border-b border-[#e0e0e0]"></div><div class="border-r border-b border-[#e0e0e0]"></div><div class="border-b border-[#e0e0e0]"></div>
          <div class="border-r border-b border-black"></div><div class="border-r border-b border-[#e0e0e0]"></div><div class="border-r border-b border-[#e0e0e0]"></div><div class="border-r border-b border-[#e0e0e0]"></div><div class="border-b border-[#e0e0e0]"></div>
          <div class="border-r border-b border-black"></div><div class="border-r border-b border-[#e0e0e0]"></div><div class="border-r border-b border-[#e0e0e0]"></div><div class="border-r border-b border-[#e0e0e0]"></div><div class="border-b border-[#e0e0e0]"></div>
          <div class="border-r border-b border-black"></div><div class="border-r border-b border-[#e0e0e0]"></div><div class="border-r border-b border-[#e0e0e0]"></div><div class="border-r border-b border-[#e0e0e0]"></div><div class="border-b border-[#e0e0e0]"></div>
          <div class="border-r border-b border-black"></div><div class="border-r border-b border-[#e0e0e0]"></div><div class="border-r border-b border-[#e0e0e0]"></div><div class="border-r border-b border-[#e0e0e0]"></div><div class="border-b border-[#e0e0e0]"></div>
        </div>
      </div>
      <!-- scrollbar -->
      <div class="relative w-[21px] h-[757px] bg-[#3f3f3f] border-l-2 border-[#4a4a4a]">
        <div class="absolute left-[5px] top-[18px] w-[9px] h-[394px] rounded-b-md bg-[#c0c0c0]"></div>
        <div class="absolute left-[4px] top-[6px] w-0 h-0 border-x-[6px] border-x-transparent border-b-[6px] border-b-[#c8c8c8]"></div>
        <div class="absolute left-[4px] bottom-[1px] w-0 h-0 border-x-[6px] border-x-transparent border-t-[6px] border-t-[#c8c8c8]"></div>
      </div>
      <span dir="rtl" lang="ar" class="absolute left-[260px] top-[410px] w-[300px] flex justify-center whitespace-nowrap font-['DejaVu_Sans',sans-serif] font-bold text-[180px] leading-[180px] text-[#ff0000] scale-x-[.69] scale-y-[1.25] [-webkit-text-stroke:5px_#ff0000]">بعد</span>
    </div>
  </div>
</div>

<script>
  const chromeTpl = document.getElementById("chrome");
  document.querySelectorAll("[data-chrome]").forEach((el) => {
    el.append(chromeTpl.content.cloneNode(true));
  });
</script>
</body>
</html>
